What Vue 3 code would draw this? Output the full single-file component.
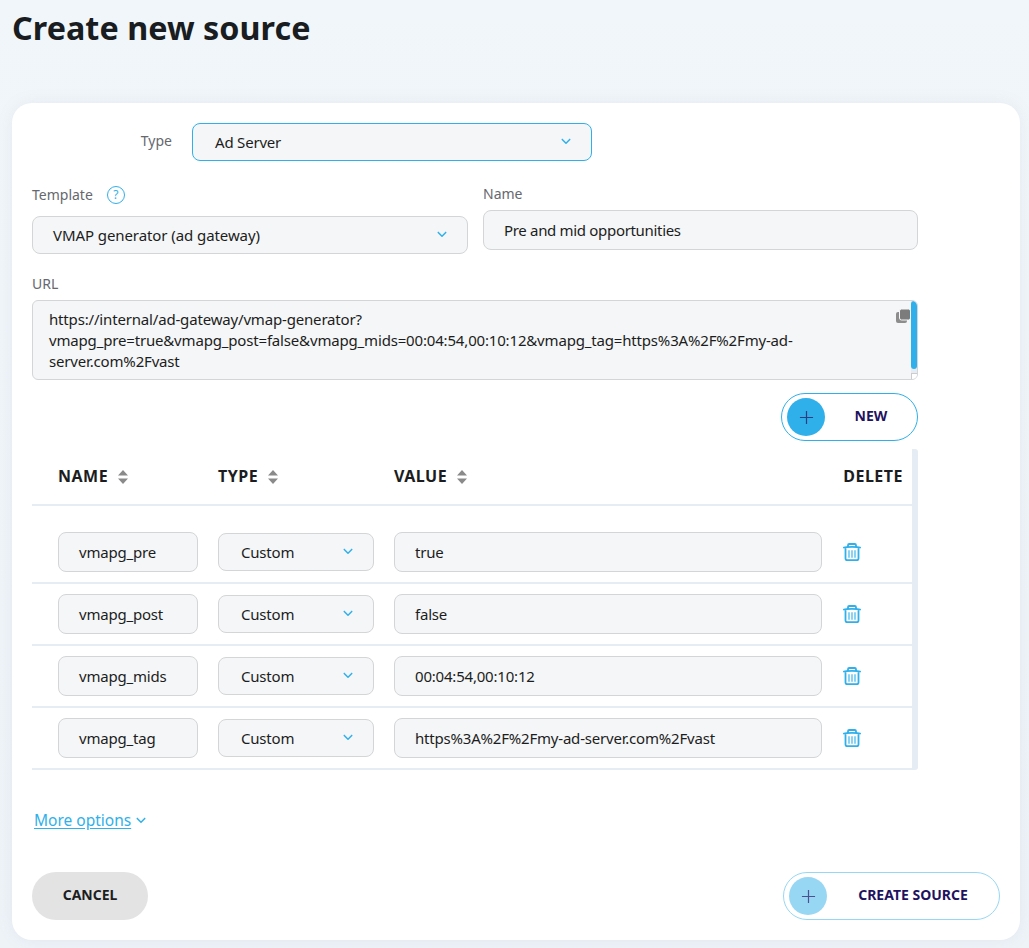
<script setup>
const params = [
  { name: 'vmapg_pre', value: 'true' },
  { name: 'vmapg_post', value: 'false' },
  { name: 'vmapg_mids', value: '00:04:54,00:10:12' },
  { name: 'vmapg_tag', value: 'https%3A%2F%2Fmy-ad-server.com%2Fvast' }
]
const headers = ['NAME', 'TYPE', 'VALUE']
</script>

<template>
  <main class="page">
    <h1 class="title">Create new source</h1>
    <section class="card">
      <div class="type-row">
        <span class="label type-label">Type</span>
        <div class="field select focus">
          <span>Ad Server</span>
          <svg class="chev" viewBox="0 0 12 8"><path d="M1.500 1.500 6 6l4.500-4.500" /></svg>
        </div>
      </div>

      <div class="two-col">
        <div class="tpl-col">
          <div class="label tpl-label">
            Template
            <span class="help">?</span>
          </div>
          <div class="field select tpl-select">
            <span>VMAP generator (ad gateway)</span>
            <svg class="chev" viewBox="0 0 12 8"><path d="M1.500 1.500 6 6l4.500-4.500" /></svg>
          </div>
        </div>
        <div class="name-col">
          <div class="label name-label">Name</div>
          <div class="field input-40">Pre and mid opportunities</div>
        </div>
      </div>

      <div class="label url-label">URL</div>
      <div class="url-box">
        <div class="url-text">https://internal/ad-gateway/vmap-generator?<br />vmapg_pre=true&amp;vmapg_post=false&amp;vmapg_mids=00:04:54,00:10:12&amp;vmapg_tag=https%3A%2F%2Fmy-ad-<br />server.com%2Fvast</div>
        <svg class="copy" viewBox="0 0 15 14">
          <rect x="0" y="3" width="11" height="11" rx="2" fill="#8d8d8d" />
          <rect x="3.500" y="0" width="11" height="11" rx="2" fill="#7c7c7c" stroke="#f5f6f8" stroke-width="1" />
        </svg>
        <i class="url-track"></i>
        <i class="url-thumb"></i>
        <i class="url-grip"></i>
      </div>

      <div class="new-row">
        <button class="pill new-btn">
          <span class="disc"><svg viewBox="0 0 16 16"><path d="M8 1v14M1 8h14" /></svg></span>
          <span class="pill-text">NEW</span>
        </button>
      </div>

      <div class="table">
        <div class="grid head">
          <div v-for="h in headers" :key="h" class="th">
            {{ h }}
            <svg class="sort" viewBox="0 0 10 14"><path d="M5 0l5 5.500H0zM5 14l5-5.500H0z" /></svg>
          </div>
          <div class="th del-head">DELETE</div>
        </div>
        <div class="spacer"></div>
        <div v-for="p in params" :key="p.name" class="grid row">
          <div class="field cell">{{ p.name }}</div>
          <div class="field cell select small">
            <span>Custom</span>
            <svg class="chev" viewBox="0 0 12 8"><path d="M1.500 1.500 6 6l4.500-4.500" /></svg>
          </div>
          <div class="field cell">{{ p.value }}</div>
          <svg class="trash" viewBox="0 0 18 18">
            <path class="tr" d="M.9 4.500c2-.8 14.200-.8 16.200 0M5 4V2.200C5 1.400 5.500 1 6.200 1h5.600c.7 0 1.200.4 1.200 1.200V4M2.500 4.800v10.700c0 1 .7 1.700 1.700 1.700h9.600c1 0 1.700-.7 1.700-1.700V4.800" />
            <path class="bars" d="M6 7.200v7.600M9 7.200v7.600M12 7.200v7.600" />
          </svg>
        </div>
      </div>

      <a class="more">
        <span class="more-text">More options</span>
        <svg class="chev" viewBox="0 0 12 8"><path d="M1.500 1.500 6 6l4.500-4.500" /></svg>
      </a>

      <div class="footer">
        <button class="cancel">CANCEL</button>
        <button class="pill create-btn">
          <span class="disc"><svg viewBox="0 0 16 16"><path d="M8 1v14M1 8h14" /></svg></span>
          <span class="pill-text">CREATE SOURCE</span>
        </button>
      </div>
    </section>
  </main>
</template>

<style>
html, body { margin: 0; background: #f0f5fa; }
</style>

<style scoped>
.page {
  width: 1029px;
  height: 948px;
  overflow: hidden;
  box-sizing: border-box;
  padding: 0 9px 8px 12px;
  font-family: "Noto Sans", "Liberation Sans", sans-serif;
  font-size: 15px;
  letter-spacing: -.2px;
  color: #1c1d21;
  background: linear-gradient(#f1f6fa, #eef3f8);
}
.title {
  margin: 0;
  height: 103px;
  box-sizing: border-box;
  padding-top: 7px;
  font-size: 32.300px;
  line-height: 40px;
  font-weight: 700;
  letter-spacing: .05px;
  color: #191c21;
}
.card {
  height: 837px;
  box-sizing: border-box;
  background: #fff;
  border-radius: 20px;
  padding: 20px 20px 0;
  box-shadow: 0 0 16px rgba(120, 140, 160, .10);
}
.label { font-size: 14px; line-height: 18px; color: #66686e; letter-spacing: 0; }
.field {
  box-sizing: border-box;
  background: #f5f6f8;
  border: 1px solid #d4d5d7;
  border-radius: 8px;
  display: flex;
  align-items: center;
  padding-left: 20px;
  padding-bottom: 1px;
  white-space: nowrap;
}
.select { justify-content: space-between; height: 38px; padding-right: 20px; }
.focus { border-color: #30b0ea; width: 400px; padding-left: 22px; }
.tpl-select { letter-spacing: -.08px; }
.chev { width: 10px; height: 7px; flex: none; }
.chev path { fill: none; stroke: #30b0ea; stroke-width: 1.800; stroke-linecap: round; stroke-linejoin: round; }
.type-row { display: flex; align-items: center; height: 38px; }
.type-label { width: 160px; text-align: right; padding-right: 20px; box-sizing: border-box; margin-top: -2px; }
.two-col { display: flex; gap: 15px; margin-top: 23px; width: 886px; }
.tpl-col { width: 436px; flex: none; }
.name-col { flex: 1; }
.tpl-label { display: flex; align-items: flex-start; height: 32px; gap: 14px; padding-top: 2px; box-sizing: border-box; }
.name-label { height: 26px; padding-top: 1px; box-sizing: border-box; line-height: 18px; }
.help {
  width: 16px; height: 16px; box-sizing: content-box;
  border: 1px solid #30b0ea; border-radius: 50%;
  color: #30b0ea; font-size: 12px; line-height: 16px; text-align: center;
}
.input-40 { height: 40px; letter-spacing: -.32px; }
.url-label { margin-top: 21px; height: 25px; line-height: 18px; }
.url-box {
  position: relative;
  width: 886px;
  height: 80px;
  box-sizing: border-box;
  background: #f5f6f8;
  border: 1px solid #d4d5d7;
  border-radius: 6px;
  overflow: hidden;
}
.url-text { padding: 8px 16px; font-size: 15px; letter-spacing: -.17px; line-height: 21px; white-space: nowrap; }
.copy { position: absolute; right: 6px; top: 8px; width: 15px; height: 14px; }
.url-track { position: absolute; right: 0; top: 0; bottom: 0; width: 6px; background: #e6ecf4; }
.url-thumb { position: absolute; right: 0; top: 0; width: 6px; height: 68px; border-radius: 3px; background: #30b0ea; }
.url-grip { position: absolute; right: 0; bottom: 0; width: 6px; height: 6px; background: #fff; border-left: 1px solid #ccc; border-top: 1px solid #ccc; box-sizing: border-box; }
.new-row { display: flex; justify-content: flex-end; width: 886px; margin-top: 13px; }
.pill {
  display: flex; align-items: center;
  height: 48px; box-sizing: border-box;
  padding: 0 0 0 5px;
  background: #fff;
  border: 1px solid #30b0ea;
  border-radius: 24px;
  font-family: inherit;
  cursor: pointer;
}
.disc {
  width: 38px; height: 38px; flex: none;
  border-radius: 50%;
  background: #30b0ea;
  display: flex; align-items: center; justify-content: center;
}
.disc svg { width: 15px; height: 15px; }
.disc path { stroke: #2a3f80; stroke-width: 1.300; fill: none; }
.pill-text { flex: 1; font-size: 14px; font-weight: 700; color: #1f1360; text-align: center; padding-bottom: 4px; }
.new-btn { width: 137px; }
.table {
  width: 886px;
  height: 321px;
  margin-top: 8px;
  box-sizing: border-box;
  border-right: 6px solid #e6ecf4;
  border-radius: 0 3px 3px 0;
}
.grid {
  display: grid;
  grid-template-columns: 140px 156px 428px 1fr;
  column-gap: 20px;
  padding-left: 26px;
  align-items: center;
  border-bottom: 2px solid #e6ecf4;
  box-sizing: border-box;
}
.head { height: 57px; padding-bottom: 2px; }
.th { display: flex; align-items: center; gap: 10px; font-size: 16px; font-weight: 700; color: #1c1d21; letter-spacing: .5px; }
.sort { width: 10px; height: 14px; margin-top: 2px; }
.sort path { fill: #8a8a8a; }
.del-head { justify-self: end; padding-right: 9px; }
.spacer { height: 16px; }
.row { height: 62px; }
.cell { height: 40px; }
.cell.small { height: 38px; padding-left: 22px; }
.trash { width: 18px; height: 18px; margin-left: 1px; }
.tr { fill: none; stroke: #30b0ea; stroke-width: 1.800; stroke-linecap: round; stroke-linejoin: round; }
.bars { fill: none; stroke: #6cc8f0; stroke-width: 1.600; }
.more {
  display: flex; align-items: center; gap: 5px;
  margin: 40px 0 0 2px;
  color: #30b0ea;
  font-size: 15.500px;
  letter-spacing: 0;
  line-height: 20px;
  height: 20px;
}
.more-text { text-decoration: underline; text-underline-offset: 2px; }
.footer { display: flex; justify-content: space-between; margin-top: 42px; }
.cancel {
  width: 116px; height: 48px;
  border: 0; border-radius: 24px;
  background: #e3e3e3;
  color: #1c1d21;
  font-family: inherit; font-size: 14px; font-weight: 700;
  padding-bottom: 5px;
}
.create-btn { width: 217px; border-color: #98d7f4; }
.create-btn .disc { background: #98d7f4; }
.create-btn .disc path { stroke: #4a5090; }
</style>
